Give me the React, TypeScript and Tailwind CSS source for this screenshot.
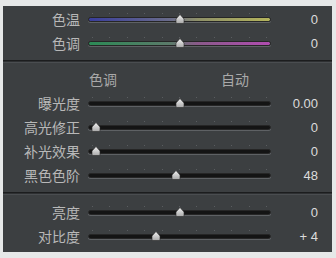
type Row = {
  label: string;
  value: string;
  pos: number;
  track?: string;
};

const top: Row[] = [
  { label: "色温", value: "0", pos: 0.5, track: "bg-[linear-gradient(to_right,#3a3e9c,#6a6c8a_45%,#8e9068_60%,#b4b45c)]" },
  { label: "色调", value: "0", pos: 0.5, track: "bg-[linear-gradient(to_right,#2c8a56,#5c7a6a_45%,#8a5a8a_60%,#b04cb0)]" },
];

const tone: Row[] = [
  { label: "曝光度", value: "0.00", pos: 0.5 },
  { label: "高光修正", value: "0", pos: 0.045 },
  { label: "补光效果", value: "0", pos: 0.045 },
  { label: "黑色色阶", value: "48", pos: 0.48 },
];

const bottom: Row[] = [
  { label: "亮度", value: "0", pos: 0.5 },
  { label: "对比度", value: "+ 4", pos: 0.37 },
];

function Thumb() {
  return (
    <svg width="11" height="10" viewBox="0 0 11 10" className="block">
      <defs>
        <linearGradient id="tg" x1="0" y1="0" x2="0" y2="1">
          <stop offset="0" stopColor="#f4f4f4" />
          <stop offset="1" stopColor="#a8a8a8" />
        </linearGradient>
      </defs>
      <path d="M5.5 0.5 L9.5 5 L9.5 8.5 Q9.5 9.5 8.5 9.5 L2.5 9.5 Q1.5 9.5 1.5 8.5 L1.5 5 Z" fill="url(#tg)" stroke="#2a2a2a" strokeWidth="0.6" />
    </svg>
  );
}

function Slider({ row }: { row: Row }) {
  return (
    <div className="relative h-6 w-[183px] shrink-0">
      <div className="absolute left-1 right-1 top-[6px] flex justify-between">
        {Array.from({ length: 11 }).map((_, i) => (
          <span key={i} className="h-px w-px bg-[#5a5d60]" />
        ))}
      </div>
      <div
        className={
          "absolute left-0 right-0 top-[10px] h-[5px] rounded-full border border-[#262626] shadow-[0_1px_0_#5e6164] " +
          (row.track ?? "bg-[#141414]")
        }
      />
      <div className="absolute top-[7px] -translate-x-1/2" style={{ left: `${row.pos * 100}%` }}>
        <Thumb />
      </div>
    </div>
  );
}

function SliderRow({ row }: { row: Row }) {
  return (
    <div className="flex h-6 items-center">
      <div className="w-[77px] shrink-0 text-right text-[14px] leading-none text-[#b8b8b8]">{row.label}</div>
      <div className="ml-[8px]">
        <Slider row={row} />
      </div>
      <div className="w-[47px] shrink-0 text-right font-['Liberation_Sans',sans-serif] text-[13px] leading-none text-[#dcdcdc]">
        {row.value}
      </div>
    </div>
  );
}

function Divider() {
  return <div className="h-[2px] border-t border-[#1c1d1e] bg-[#2e3032] shadow-[0_1px_0_#4a4d50]" />;
}

export default function App() {
  return (
    <div className="h-[258px] w-[336px] bg-[#e6e8e8] pl-[3px] pr-1 pt-[6px] font-['Noto_Sans_CJK_SC','Noto_Sans',sans-serif]">
      <div className="h-[246px] w-[329px] bg-[#3c3f41]">
        <div className="pt-px pb-[5px]">
          {top.map((r) => (
            <SliderRow key={r.label} row={r} />
          ))}
        </div>
        <Divider />
        <div className="pt-[5px] pb-[5px]">
          <div className="flex h-6 items-center text-[14px] leading-none text-[#a9a9a9]">
            <span className="ml-[86px]">色调</span>
            <span className="ml-[104px]">自动</span>
          </div>
          {tone.map((r) => (
            <SliderRow key={r.label} row={r} />
          ))}
        </div>
        <Divider />
        <div className="pt-[6px]">
          {bottom.map((r) => (
            <SliderRow key={r.label} row={r} />
          ))}
        </div>
      </div>
    </div>
  );
}
